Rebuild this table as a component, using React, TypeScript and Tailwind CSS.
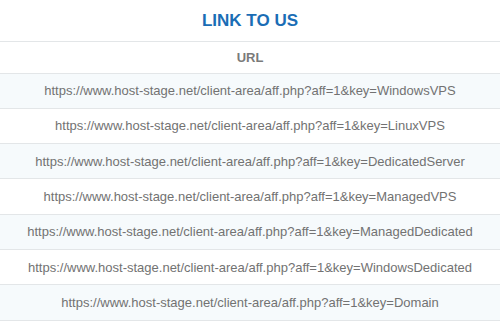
import React from "react";

const keys = [
    "WindowsVPS",
    "LinuxVPS",
    "DedicatedServer",
    "ManagedVPS",
    "ManagedDedicated",
    "WindowsDedicated",
    "Domain",
];

export default function App() {
    return (
        <div className="w-[500px] h-[328px] overflow-hidden bg-white" style={{ fontFamily: '"Liberation Sans", Arial, sans-serif' }}>
            <h2 className="h-[42px] pt-[1px] flex items-center justify-center text-[17px] font-bold text-[#1a6db5] border-b border-[#e3e6e8]">LINK TO US</h2>
            <table className="w-full border-collapse">
                <thead>
                    <tr className="border-b border-[#e3e6e8]">
                        <th className="h-[31px] text-center text-[13px] font-bold text-[#7a7a7a]">URL</th>
                    </tr>
                </thead>
                <tbody>
                    {keys.map((key, i) => (
                        <tr key={key} className={`border-b border-[#e3e6e8] ${i % 2 === 0 ? "bg-[#f6fafc]" : "bg-white"}`}>
                            <td className="h-[35.34px] text-center text-[13px] text-[#727272]">
                                https://www.host-stage.net/client-area/aff.php?aff=1&amp;key={key}
                            </td>
                        </tr>
                    ))}
                </tbody>
            </table>
        </div>
    );
}
